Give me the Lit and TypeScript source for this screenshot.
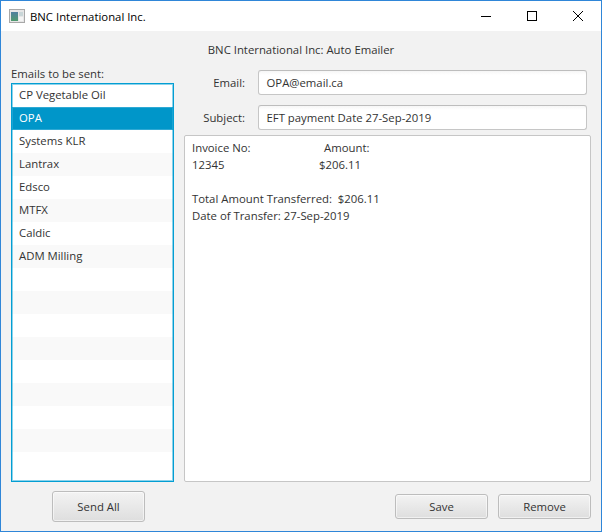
import { LitElement, html, css } from "lit";
import { customElement } from "lit/decorators.js";

const NAMES = ["CP Vegetable Oil", "OPA", "Systems KLR", "Lantrax", "Edsco", "MTFX", "Caldic", "ADM Milling"];
const ROWS = 17;

@customElement("app-root")
export class AppRoot extends LitElement {
  static styles = css`
    :host {
      display: block;
      width: 602px;
      height: 532px;
      box-sizing: border-box;
      border: 1px solid #2f86d8;
      background: #f2f2f2;
      font-family: "Open Sans", "Noto Sans", sans-serif;
      font-size: 11.35px;
      color: #333;
      overflow: hidden;
    }
    .win { display: flex; flex-direction: column; height: 100%; }
    .titlebar {
      height: 30px;
      background: #fff;
      display: flex;
      align-items: center;
      color: #000;
      flex: none;
    }
    .appicon { margin-left: 8px; margin-right: 5px; flex: none; display: block; }
    .title { flex: 1; }
    .ctl { width: 46px; height: 30px; display: flex; align-items: center; justify-content: center; }
    .ctl svg { display: block; }
    .heading { text-align: center; height: 17px; line-height: 17px; margin-top: 10px; flex: none; }
    .main { flex: 1; display: flex; gap: 10px; padding: 3px 10px 9px 10px; min-height: 0; }
    .left { width: 163px; flex: none; display: flex; flex-direction: column; }
    .listlabel { height: 17px; line-height: 17px; margin-top: 4px; margin-bottom: 1px; }
    .list {
      box-sizing: border-box;
      height: 400px;
      border: 1px solid #039ed3;
      outline: 1px solid rgba(3, 158, 211, .45);
      outline-offset: -2px;
      background: #fff;
      overflow: hidden;
    }
    .row { height: 23px; line-height: 22px; padding-left: 7px; background: #fff; white-space: nowrap; }
    .row.odd { background: #f9f9f9; }
    .row.sel { background: #0096c9; color: #fff; box-shadow: inset 0 0 0 1px #2fa9d4; }
    .leftfoot { display: flex; justify-content: center; margin-top: 9px; padding-left: 12px; }
    .right { flex: 1; display: flex; flex-direction: column; min-width: 0; padding-top: 9px; }
    .fields { display: grid; grid-template-columns: 74px 329px; row-gap: 10px; justify-content: start; }
    .flabel { text-align: right; padding-right: 13px; line-height: 25px; }
    .input {
      box-sizing: border-box;
      height: 25px;
      line-height: 23px;
      background: linear-gradient(#f6f6f6, #fff 4px);
      border: 1px solid #c6c6c6;
      border-top-color: #bdbdbd;
      border-radius: 3px;
      padding-left: 7.5px;
      white-space: nowrap;
    }
    .area {
      box-sizing: border-box;
      height: 347px;
      margin-top: 5px;
      background: #fff;
      border: 1px solid #c6c6c6;
      border-radius: 2px;
      padding: 3px 7px;
      line-height: 17px;
    }
    .line { height: 17px; display: flex; white-space: pre; }
    .c1 { width: 132px; }
    .c1b { width: 127px; }
    .rightfoot { display: flex; justify-content: flex-end; gap: 10px; margin-top: 12px; }
    .btn {
      box-sizing: border-box;
      width: 93px;
      height: 25px;
      display: flex;
      align-items: center;
      justify-content: center;
      border: 1px solid #bdbdbd;
      border-radius: 3px;
      background: linear-gradient(#f3f3f3, #dedede);
      box-shadow: inset 0 0 0 1px rgba(255,255,255,.55);
    }
    .btn.tall { height: 31px; }
  `;

  render() {
    const rows = Array.from({ length: ROWS }, (_, i) => NAMES[i] ?? "");
    return html`<div class="win">
      <div class="titlebar">
        <svg class="appicon" width="16" height="14" viewBox="0 0 16 14">
          <defs>
            <linearGradient id="ic" x1="0" y1="0" x2="0" y2="1">
              <stop offset="0" stop-color="#4f7f9f"/>
              <stop offset="1" stop-color="#4f9a6e"/>
            </linearGradient>
          </defs>
          <rect x="0.5" y="0.5" width="15" height="13" fill="#e6e6e6" stroke="#a8a8a8"/>
          <rect x="2" y="3" width="7" height="9" fill="url(#ic)"/>
          <rect x="10" y="3" width="4" height="4" fill="#c9d6d8"/>
          <rect x="10" y="8" width="4" height="4" fill="#f4f4f4"/>
        </svg>
        <div class="title">BNC International Inc.</div>
        <div class="ctl"><svg width="10" height="10" viewBox="0 0 10 10"><path d="M0 5.5H10" stroke="#000"/></svg></div>
        <div class="ctl"><svg width="10" height="10" viewBox="0 0 10 10"><rect x="0.5" y="0.5" width="9" height="9" fill="none" stroke="#000"/></svg></div>
        <div class="ctl"><svg width="10" height="10" viewBox="0 0 10 10"><path d="M0 0L10 10M10 0L0 10" stroke="#000" stroke-width="1"/></svg></div>
      </div>
      <div class="heading">BNC International Inc: Auto Emailer</div>
      <div class="main">
        <div class="left">
          <div class="listlabel">Emails to be sent:</div>
          <div class="list">
            ${rows.map((n, i) => html`<div class="row ${i % 2 ? "odd" : ""} ${i === 1 ? "sel" : ""}">${n}</div>`)}
          </div>
          <div class="leftfoot"><div class="btn tall">Send All</div></div>
        </div>
        <div class="right">
          <div class="fields">
            <div class="flabel">Email:</div><div class="input">OPA@email.ca</div>
            <div class="flabel">Subject:</div><div class="input">EFT payment Date 27-Sep-2019</div>
          </div>
          <div class="area">
            <div class="line"><span class="c1">Invoice No:</span><span>Amount:</span></div>
            <div class="line"><span class="c1b">12345</span><span>$206.11</span></div>
            <div class="line"></div>
            <div class="line">Total Amount Transferred:  $206.11</div>
            <div class="line">Date of Transfer: 27-Sep-2019</div>
          </div>
          <div class="rightfoot"><div class="btn">Save</div><div class="btn">Remove</div></div>
        </div>
      </div>
    </div>`;
  }
}
